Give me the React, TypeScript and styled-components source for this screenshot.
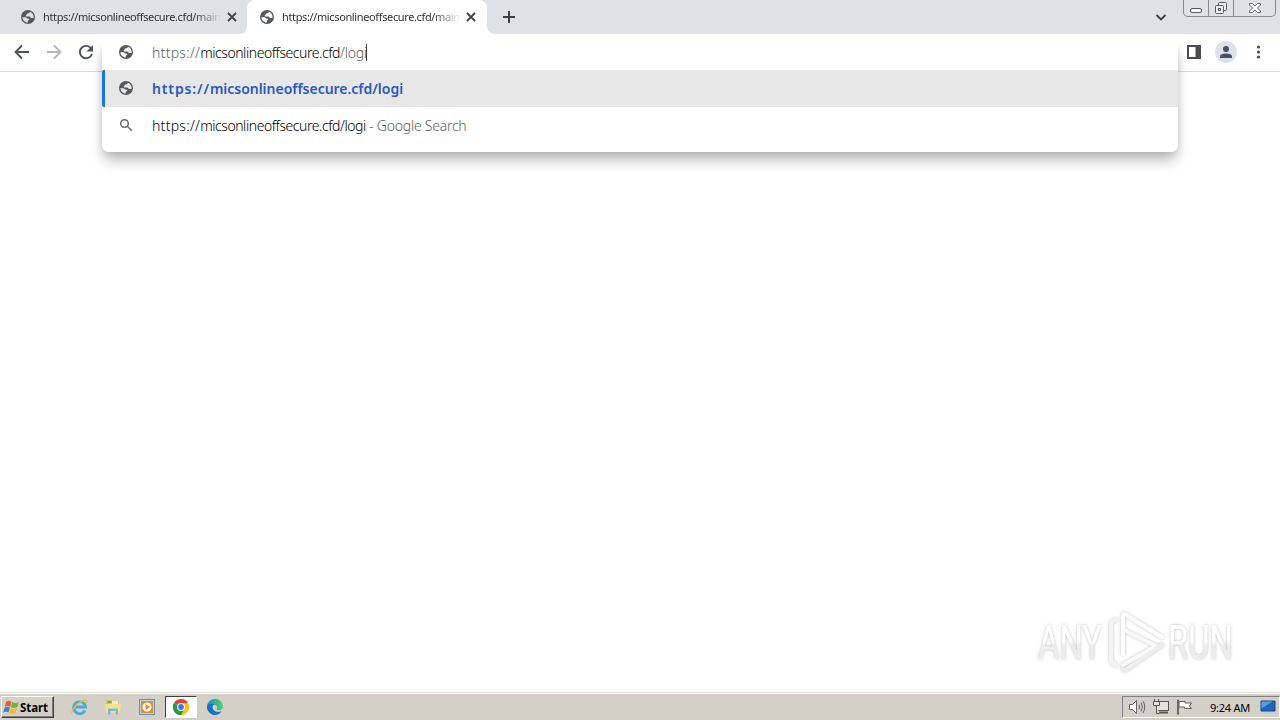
import React from 'react'
import styled, { createGlobalStyle } from 'styled-components'

const GlobalStyle = createGlobalStyle`
  * {
    box-sizing: border-box;
  }

  body {
    margin: 0;
    background: #fff;
    overflow: hidden;
    font-family: 'Noto Sans', 'Open Sans', sans-serif;
  }

  svg {
    display: block;
    flex-shrink: 0;
  }
`

const StyledScreen = styled.div`
  position: relative;
  display: flex;
  flex-direction: column;
  width: 1280px;
  height: 720px;
  overflow: hidden;
  background: #fff;
`

const StyledTabStrip = styled.div`
  display: flex;
  height: 34px;
  background: #dee1e8;
`

const StyledTab = styled.div<{ $active?: boolean }>`
  position: relative;
  display: flex;
  align-items: center;
  width: ${({ $active }) => ($active ? '240px' : '247px')};
  height: 34px;
  padding-left: ${({ $active }) => ($active ? '12px' : '20px')};
  border-radius: 8px 8px 0 0;
  background: ${({ $active }) => ($active ? '#fff' : 'transparent')};

  /* Small flares where the active tab meets the toolbar. */
  &::before,
  &::after {
    content: '';
    display: ${({ $active }) => ($active ? 'block' : 'none')};
    position: absolute;
    bottom: 0;
    width: 7px;
    height: 7px;
  }

  &::before {
    left: -7px;
    background: radial-gradient(circle at 0 0, transparent 6.5px, #fff 7px);
  }

  &::after {
    right: -7px;
    background: radial-gradient(circle at 100% 0, transparent 6.5px, #fff 7px);
  }
`

const StyledTabTitle = styled.span`
  width: 177px;
  margin: 0 7px;
  overflow: hidden;
  white-space: nowrap;
  font-size: 11px;
  line-height: 16px;
  letter-spacing: -0.37px;
  color: #303338;
  mask-image: linear-gradient(90deg, #000 152px, transparent 179px);
`

const StyledNewTab = styled.div`
  display: flex;
  align-items: center;
  padding-left: 15px;
`

const StyledStripEnd = styled.div`
  display: flex;
  margin-left: auto;
`

const StyledTabSearch = styled.div`
  display: flex;
  align-items: center;
  margin-right: 16px;
`

const StyledCaption = styled.div`
  display: flex;
  width: 93px;
  height: 17px;
  margin-right: 4px;
  border: 1px solid #858991;
  border-top: 0;
  border-radius: 0 0 5px 5px;
`

const StyledCaptionButton = styled.div<{ $width: number }>`
  display: flex;
  justify-content: center;
  width: ${({ $width }) => $width}px;
  border-right: 1px solid #858991;

  &:last-child {
    border-right: 0;
  }
`

const StyledToolbar = styled.div`
  display: flex;
  align-items: center;
  justify-content: space-between;
  height: 38px;
  padding: 0 11px 1px 13px;
  border-bottom: 1px solid #d9dbde;
  background: #fff;
`

const StyledToolGroup = styled.div<{ $gap: number }>`
  display: flex;
  align-items: center;
  gap: ${({ $gap }) => $gap}px;
`

const StyledAvatar = styled.div`
  display: flex;
  align-items: center;
  justify-content: center;
  width: 22px;
  height: 22px;
  border-radius: 50%;
  background: #dde1e8;
`

const StyledOmnibox = styled.div`
  position: absolute;
  top: 35px;
  left: 102px;
  width: 1076px;
  height: 117px;
  padding-bottom: 8px;
  overflow: hidden;
  border-radius: 7px;
  background: #fff;
`

/* Kept apart so the shadow stays beneath the tab strip's bottom edge. */
const StyledOmniboxShadow = styled.div`
  position: absolute;
  top: 42px;
  left: 102px;
  width: 1076px;
  height: 110px;
  border-radius: 7px;
  box-shadow:
    0 10px 14px -2px rgba(0, 0, 0, 0.27),
    0 1px 7px rgba(0, 0, 0, 0.1);
`

const StyledRow = styled.div<{ $height: number; $selected?: boolean }>`
  display: flex;
  align-items: center;
  height: ${({ $height }) => $height}px;
  padding-left: ${({ $selected }) => ($selected ? '13px' : '16px')};
  border-left: ${({ $selected }) => ($selected ? '3px solid #1a73e8' : '0')};
  border-radius: ${({ $selected }) => ($selected ? '2px 0 0 2px' : '0')};
  background: ${({ $selected }) => ($selected ? '#e7e7e7' : '#fff')};

  > svg {
    margin-bottom: 2px;
  }
`

const StyledUrl = styled.span<{ $bold?: boolean }>`
  display: inline-flex;
  align-items: center;
  margin-left: 18px;
  white-space: pre;
  font-size: 14px;
  line-height: 20px;
  font-weight: ${({ $bold }) => ($bold ? 600 : 300)};
  letter-spacing: ${({ $bold }) => ($bold ? -0.02 : -0.45)}px;
  color: ${({ $bold }) => ($bold ? '#2a59c0' : '#000')};
`

const StyledScheme = styled.span<{ $muted?: boolean; $bold?: boolean }>`
  letter-spacing: ${({ $bold }) => ($bold ? 0.86 : 0.28)}px;
  color: ${({ $muted }) => ($muted ? '#5c5e62' : 'inherit')};
`

const StyledMuted = styled.span`
  letter-spacing: -0.25px;
  color: #5c5e62;
`

const StyledCaret = styled.i`
  width: 1px;
  height: 17px;
  margin-left: -1px;
  background: #444;
`

const StyledPage = styled.main`
  flex: 1;
  background: #fff;
`

const StyledWatermark = styled.div`
  position: absolute;
  top: 602px;
  left: 1030px;
`

const StyledTaskbar = styled.footer`
  display: flex;
  align-items: center;
  height: 28px;
  padding: 2px 0 0 1px;
  background: linear-gradient(#dedbd4 0 1px, #fff 1px 2px, #d4d0c8 2px);
`

const StyledStart = styled.div`
  display: flex;
  align-items: center;
  width: 53px;
  height: 22px;
  padding-left: 1px;
  border: 1px solid;
  border-color: #fff #404040 #404040 #fff;
  box-shadow: inset -1px -1px #808080;
  font-weight: 700;
  font-size: 11.5px;
  letter-spacing: -0.1px;
  color: #000;
`

const StyledLaunchers = styled.div`
  display: flex;
  align-items: center;
  margin-left: 8px;
`

const StyledLauncher = styled.div<{ $pressed?: boolean }>`
  display: flex;
  align-items: center;
  justify-content: center;
  width: ${({ $pressed }) => ($pressed ? '32px' : '34px')};
  height: 22px;
  margin: ${({ $pressed }) => ($pressed ? '0 1px' : '0')};
  border: ${({ $pressed }) => ($pressed ? '1px solid' : '0')};
  border-color: #404040 #fff #fff #404040;
  background: ${({ $pressed }) => ($pressed ? '#fff' : 'transparent')};
`

const StyledTray = styled.div`
  display: flex;
  align-items: center;
  width: 158px;
  height: 22px;
  margin-left: auto;
  padding-left: 5px;
  border: 1px solid;
  border-color: #808080 #fff #fff #808080;
`

const StyledTrayIcons = styled.div`
  display: flex;
  gap: 7px;
`

const StyledClock = styled.span`
  margin: 0 10px 0 17px;
  white-space: nowrap;
  font-size: 11px;
  letter-spacing: -0.25px;
  color: #000;
`

const Globe = () => (
  <svg width="16" height="16" viewBox="0 0 16 16">
    <path
      fill="#55585c"
      fillRule="evenodd"
      d="M8 1a7 7 0 1 1 0 14A7 7 0 0 1 8 1zM9.8 2.7C9.8 4.3 8.2 4.2 7.3 4.5 6.5 4.8 6.7 6 5.8 6.3v1.2h3.4c1.2 0 1 1.5 2.1 1.5h2.1c.1-.3.2-.7.2-1A5.7 5.7 0 0 0 9.8 2.7zM2.4 8.3c.2 2.9 2.5 5.2 5.400 5.300v-1.700c0-.7 1.500-.5 1.500-1.400 0-1-1-1-2-1.100C6.500 9.300 6.600 8.300 5.500 8.300z"
    />
  </svg>
)

const Arrow = ({ forward }: { forward?: boolean }) => (
  <svg width="18" height="18" viewBox="0 0 18 18" fill="none" stroke={forward ? '#b4b5b7' : '#505357'} strokeWidth="1.8">
    <path d={forward ? 'M2 9h13M9 2.5 15.5 9 9 15.5' : 'M16 9H3M9 2.5 2.5 9 9 15.5'} />
  </svg>
)

const Tab = ({ active }: { active?: boolean }) => (
  <StyledTab $active={active}>
    <Globe />
    <StyledTabTitle>https://micsonlineoffsecure.cfd/main</StyledTabTitle>
    <svg width="10" height="10" viewBox="0 0 10 10" stroke="#3f4247" strokeWidth="1.8">
      <path d="m1 1 8 8M9 1 1 9" />
    </svg>
  </StyledTab>
)

const CaptionButtons = () => (
  <StyledCaption>
    <StyledCaptionButton $width={25}>
      <svg width="14" height="16" viewBox="0 0 14 16">
        <rect x="1.5" y="8.5" width="11" height="4" rx="1.5" fill="#f5f6f8" stroke="#565a66" />
      </svg>
    </StyledCaptionButton>
    <StyledCaptionButton $width={25}>
      <svg width="14" height="16" viewBox="0 0 14 16" fill="#eceef2" stroke="#565a66">
        <rect x="4.5" y="2.5" width="8" height="8" rx="1" />
        <rect x="1.5" y="5.5" width="8" height="8" rx="1" />
        <rect x="4.5" y="8.5" width="2" height="2" />
      </svg>
    </StyledCaptionButton>
    <StyledCaptionButton $width={41}>
      <svg width="14" height="16" viewBox="0 0 14 16" fill="#f5f6f8" stroke="#6b6e78">
        <path d="M1.5 3.5h3L7 6l2.5-2.5h3V5l-3 3 3 3v1.5h-3L7 10l-2.5 2.5h-3V11l3-3-3-3z" />
      </svg>
    </StyledCaptionButton>
  </StyledCaption>
)

const StartFlag = () => (
  <svg width="17" height="17" viewBox="0 0 16 16">
    <path d="M3 2.5c2-1.3 3.3-1 5 0L6.8 7.3C5 6.2 3.7 6.3 1.7 7.3z" fill="#e8602c" />
    <path d="M8.7 2.9c2 1.1 4 1.1 6 .1l-1.3 4.7c-2 1-3.9 1-5.9-.1z" fill="#75b343" />
    <path d="M1.5 8.2c2-1.2 3.3-1 5 0l-1.3 4.6c-1.7-1-3-1.1-5 0z" fill="#3b83cf" />
    <path d="M7.2 8.5c2 1.1 4 1.1 6 .1l-1.3 4.7c-2 1-4 1-6-.1z" fill="#f4bd2e" />
  </svg>
)

const ExplorerIcon = () => (
  <svg width="18" height="18" viewBox="0 0 18 18" fill="none">
    <path d="M15 12.3a6 6 0 1 1 .6-3.300H5" stroke="#48aae1" strokeWidth="2.800" />
    <path d="M2.500 16C-1 14.500 8 3.500 14.500 2c3-.6 2.500 2 1.300 4" stroke="#e7bd3e" strokeWidth="1.300" />
  </svg>
)

const FolderIcon = () => (
  <svg width="18" height="18" viewBox="0 0 18 18">
    <path d="M2 2h5l1 1.500h7V14H2z" fill="#e0c163" />
    <path d="M3.500 3h4v2h-4z" fill="#6fae62" />
    <path d="M8 3h6v3H8z" fill="#f8edb8" />
    <path d="M1 6h16l-1 8.500H2z" fill="#f5e08e" />
    <path d="M4 16.500v-5q0-1 1-1h8q1 0 1 1v5h-2.500V13h-5v3.500z" fill="#7bb9dc" />
  </svg>
)

const PlayerIcon = () => (
  <svg width="18" height="18" viewBox="0 0 18 18">
    <rect x="1.500" y="1.500" width="15" height="15" fill="#b9d8ef" stroke="#5a92c3" />
    <rect x="3" y="3" width="12" height="12" fill="#ee8a1c" />
    <circle cx="9" cy="9" r="4.500" fill="#fff" />
    <path d="m7.500 6 4.500 3-4.500 3z" fill="#ee8214" />
  </svg>
)

const ChromeIcon = () => (
  <svg width="16" height="16" viewBox="0 0 16 16">
    <path d="M8 8 1.070 4A8 8 0 0 1 14.930 4z" fill="#e34133" />
    <path d="M8 8 14.930 4A8 8 0 0 1 8 16z" fill="#fbc116" />
    <path d="M8 8v8A8 8 0 0 1 1.070 4z" fill="#279847" />
    <path d="M8 4.200h6.930A8 8 0 0 1 8 16l3.300-6z" fill="#fbc116" />
    <path d="M1.070 4 4.700 9.900 8 11.800 11.200 10 8 16A8 8 0 0 1 1.070 4z" fill="#279847" />
    <circle cx="8" cy="8" r="3.900" fill="#fff" />
    <circle cx="8" cy="8" r="2.900" fill="#3979e6" />
  </svg>
)

const EdgeIcon = () => (
  <svg width="18" height="18" viewBox="0 0 18 18">
    <defs>
      <linearGradient id="edgeTop">
        <stop stopColor="#168bd0" />
        <stop offset="1" stopColor="#58cf66" />
      </linearGradient>
    </defs>
    <path d="M1 9a8 8 0 0 1 16-.5c0 2.500-1.700 3.700-4 3.700-2 0-2.700-.7-2.200-1.700C12 8 9 6 6 7c-3 1-4 4-2.500 7A8 8 0 0 1 1 9z" fill="url(#edgeTop)" />
    <path d="M1 8.500C2 5.500 6 5 8.500 6.500 6.500 7 6 9 7 11c1.300 2.800 5 3.500 8.500 2.300C13 17.500 8 18 4.500 15.500 2 13.800.8 11 1 8.500z" fill="#1873c4" />
  </svg>
)

const TrayIcons = () => (
  <StyledTrayIcons>
    <svg width="18" height="16" viewBox="0 0 18 16" fill="none" stroke="#66645f">
      <path d="M1.500 5.500h3l4-4v13l-4-4h-3z" fill="#fff" />
      <path d="M11 5.500q1.500 2.500 0 5M13 3.500q3 4.500 0 9M15 2q3.500 6 0 12" />
    </svg>
    <svg width="16" height="16" viewBox="0 0 16 16" fill="#e4e2dc" stroke="#57554f">
      <rect x="3.500" y="2.500" width="12" height="9" />
      <path d="M6 13.500h9" strokeWidth="2" />
      <path d="M1.500 0v2.500M5.500 0v2.500M.5 2.500h6v4h-6zM3.500 7v7.500h3" />
    </svg>
    <svg width="17" height="16" viewBox="0 0 17 16" fill="#fff" stroke="#66645f">
      <path d="M1.500 1v14.500h1V1zM3 2.500h6V4h6.500l-2 3 2 2.500H8.500V8H3z" />
    </svg>
  </StyledTrayIcons>
)

const Watermark = () => (
  <StyledWatermark>
    <svg width="230" height="80" viewBox="0 0 230 80">
      <defs>
        <linearGradient id="markFill" x1="0" y1="0" x2="0" y2="1">
          <stop offset=".48" stopColor="#fff" />
          <stop offset=".55" stopColor="#ededed" />
        </linearGradient>
        <filter id="markShadow" x="-10%" y="-10%" width="120%" height="120%">
          <feDropShadow dx="0" dy="0" stdDeviation="1.700" floodColor="#777" floodOpacity=".5" />
        </filter>
      </defs>
      <g filter="url(#markShadow)" fill="url(#markFill)" fontFamily="Roboto, sans-serif" fontSize="48" fontWeight="400">
        <text x="8" y="57" textLength="64" lengthAdjust="spacingAndGlyphs">ANY</text>
        <text x="138" y="57" textLength="65" lengthAdjust="spacingAndGlyphs">RUN</text>
        <g fill="none" strokeWidth="4" strokeLinejoin="round" strokeLinecap="round">
          <path d="M86 18q-5 0-5 6v33q0 4 5 6" stroke="#f4f4f4" />
          <path d="M93 52V14q0-3 3-1l36 22" stroke="#fff" />
          <path d="m94 28 32 16-33 19" stroke="#f8f8f8" />
          <path d="M93 67l2 1 37-25" stroke="#eee" />
        </g>
      </g>
    </svg>
  </StyledWatermark>
)

export default function App() {
  return (
    <>
      <GlobalStyle />
      <StyledScreen>
        <StyledTabStrip>
          <Tab />
          <Tab active />
          <StyledNewTab>
            <svg width="14" height="14" viewBox="0 0 14 14" stroke="#3c4045" strokeWidth="2">
              <path d="M1 7h12M7 1v12" />
            </svg>
          </StyledNewTab>
          <StyledStripEnd>
            <StyledTabSearch>
              <svg width="12" height="12" viewBox="0 0 12 12" fill="none" stroke="#3c4045" strokeWidth="1.900">
                <path d="m1.500 4 4.500 4.500L10.500 4" />
              </svg>
            </StyledTabSearch>
            <CaptionButtons />
          </StyledStripEnd>
        </StyledTabStrip>

        <StyledToolbar>
          <StyledToolGroup $gap={14}>
            <Arrow />
            <Arrow forward />
            <svg width="18" height="18" viewBox="0 0 18 18">
              <path d="M14.300 5.700A6.200 6.200 0 1 0 15 11" fill="none" stroke="#505357" strokeWidth="1.900" />
              <path d="M16 2v6.500H9.500z" fill="#505357" />
            </svg>
          </StyledToolGroup>
          <StyledToolGroup $gap={14}>
            <svg width="14" height="14" viewBox="0 0 14 14">
              <path d="M0 0h14v14H0zm2 2v10h6.500V2z" fill="#4b4c50" fillRule="evenodd" />
            </svg>
            <StyledAvatar>
              <svg width="14" height="14" viewBox="0 0 14 14" fill="#47506b">
                <circle cx="7" cy="4" r="3" />
                <path d="M1 13v-1.500C1 9.300 4.500 8.500 7 8.500s6 .8 6 3V13z" />
              </svg>
            </StyledAvatar>
            <svg width="18" height="16" viewBox="0 0 18 16" fill="#4b4c50">
              <circle cx="7.500" cy="3" r="1.600" />
              <circle cx="7.500" cy="8" r="1.600" />
              <circle cx="7.500" cy="13" r="1.600" />
            </svg>
          </StyledToolGroup>
        </StyledToolbar>

        <StyledPage />

        <StyledTaskbar>
          <StyledStart>
            <StartFlag />
            Start
          </StyledStart>
          <StyledLaunchers>
            <StyledLauncher><ExplorerIcon /></StyledLauncher>
            <StyledLauncher><FolderIcon /></StyledLauncher>
            <StyledLauncher><PlayerIcon /></StyledLauncher>
            <StyledLauncher $pressed><ChromeIcon /></StyledLauncher>
            <StyledLauncher><EdgeIcon /></StyledLauncher>
          </StyledLaunchers>
          <StyledTray>
            <TrayIcons />
            <StyledClock>9:24 AM</StyledClock>
            <svg width="16" height="14" viewBox="0 0 16 14">
              <path d="M1 1h14v10H1z" fill="#2165b9" stroke="#16458d" />
              <path d="m1.500 1.500 11 0-11 7z" fill="#5b9ddd" />
              <path d="M4 12h11v1.500H4z" fill="#b6d1e9" />
            </svg>
          </StyledTray>
        </StyledTaskbar>

        <StyledOmniboxShadow />
        <StyledOmnibox>
          <StyledRow $height={35}>
            <Globe />
            <StyledUrl>
              <StyledScheme $muted>https://</StyledScheme>
              micsonlineoffsecure.cfd
              <StyledMuted>/logi</StyledMuted>
              <StyledCaret />
            </StyledUrl>
          </StyledRow>
          <StyledRow $height={37} $selected>
            <Globe />
            <StyledUrl $bold>
              <StyledScheme $bold>https://</StyledScheme>
              micsonlineoffsecure.cfd/logi
            </StyledUrl>
          </StyledRow>
          <StyledRow $height={37}>
            <svg width="16" height="16" viewBox="0 0 16 16" fill="none" stroke="#66696d" strokeWidth="1.500">
              <circle cx="6.500" cy="6.500" r="3.800" />
              <path d="m9.300 9.300 4.500 4.500" />
            </svg>
            <StyledUrl>
              <StyledScheme>https://</StyledScheme>
              micsonlineoffsecure.cfd/logi
              <StyledMuted> - Google Search</StyledMuted>
            </StyledUrl>
          </StyledRow>
        </StyledOmnibox>

        <Watermark />
      </StyledScreen>
    </>
  )
}
